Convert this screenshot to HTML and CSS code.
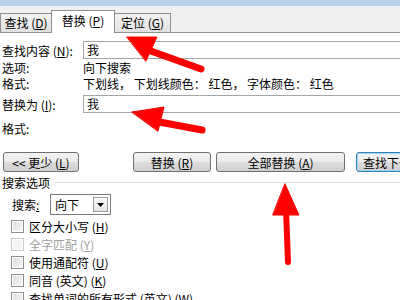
FILE: index.html
```html
<!DOCTYPE html>
<html>
<head>
<meta charset="utf-8">
<link rel="stylesheet" href="styles.css">
</head>
<body>
<div class="win">
  <div class="topband"></div>
  <div class="tabs">
    <div class="tab t1">查找 (<u>D</u>)</div>
    <div class="tab active">替换 (<u>P</u>)</div>
    <div class="tab t3">定位 (<u>G</u>)</div>
  </div>
  <div class="panel">
    <div class="row r1">
      <span class="lbl">查找内容 (<u>N</u>):</span>
      <div class="field">我</div>
    </div>
    <div class="row line">
      <span class="lbl">选项:</span><span>向下搜索</span>
    </div>
    <div class="row line">
      <span class="lbl">格式:</span><span>下划线， 下划线颜色： 红色， 字体颜色： 红色</span>
    </div>
    <div class="row r2">
      <span class="lbl">替换为 (<u>I</u>):</span>
      <div class="field">我</div>
    </div>
    <div class="row line r3">
      <span class="lbl">格式:</span>
    </div>
    <div class="btnrow">
      <div class="btn b1">&lt;&lt; 更少 (<u>L</u>)</div>
      <div class="btn b2">替换 (<u>R</u>)</div>
      <div class="btn b3">全部替换 (<u>A</u>)</div>
      <div class="btn b4">查找下一处</div>
    </div>
    <div class="group">
      <span>搜索选项</span><div class="sep"></div>
    </div>
    <div class="search">
      <span class="slbl">搜索<u>:</u></span>
      <div class="select">
        <span class="val">向下</span>
        <div class="drop"><svg width="7" height="4" viewBox="0 0 7 4"><path d="M0 0H7L3.5 4Z" fill="#000"/></svg></div>
      </div>
    </div>
    <div class="chk"><span class="box"></span>区分大小写 (<u>H</u>)</div>
    <div class="chk dis"><span class="box"></span>全字匹配 (<u>Y</u>)</div>
    <div class="chk"><span class="box"></span>使用通配符 (<u>U</u>)</div>
    <div class="chk"><span class="box"></span>同音 (英文) (<u>K</u>)</div>
    <div class="chk"><span class="box"></span>查找单词的所有形式 (英文) (<u>W</u>)</div>
  </div>
  <svg class="arrows" width="400" height="300" viewBox="0 0 400 300">
    <g fill="#ff0000" stroke="#ff0000" stroke-linecap="round" stroke-linejoin="round">
      <line x1="148" y1="50" x2="201" y2="69" stroke-width="7"/>
      <polygon points="127,37 157,37 146,61" stroke-width="1"/>
      <line x1="154" y1="121" x2="202" y2="130" stroke-width="7"/>
      <polygon points="132,112 164,107 158,131" stroke-width="1"/>
      <line x1="286" y1="210" x2="288" y2="262" stroke-width="6"/>
      <polygon points="285,184 299,215 273,215" stroke-width="1"/>
    </g>
  </svg>
</div>
</body>
</html>
```

FILE: styles.css
```css
* { box-sizing: border-box; }
body {
  margin: 0;
  font-family: "Noto Sans CJK SC", "Noto Sans", sans-serif;
  font-size: 12px;
  color: #000;
}
u { text-decoration: underline; text-underline-offset: 1px; }
.win {
  position: relative;
  width: 400px;
  height: 300px;
  overflow: hidden;
  background: #fff;
}
.topband { height: 6px; background: #b9d1ea; }
.tabs {
  height: 27px;
  background: #f0f0f0;
  display: flex;
  align-items: flex-end;
  border-bottom: 1px solid #919191;
}
.tab {
  height: 19px;
  border: 1px solid #919191;
  border-bottom: none;
  background: linear-gradient(#f3f3f3, #e1e1e1);
  display: flex;
  align-items: center;
  justify-content: center;
  line-height: 1;
  white-space: nowrap;
}
.t1 { width: 52px; }
.tab.active {
  width: 64px;
  height: 23px;
  margin-left: -1px;
  margin-bottom: -1px;
  background: #fff;
  position: relative;
  padding-bottom: 3px;
}
.t3 { width: 57px; margin-left: -1px; }
.panel { padding-left: 2px; }
.row { display: flex; align-items: center; white-space: nowrap; }
.lbl { width: 81px; flex: none; }
.r1 { margin-top: 8px; }
.field {
  flex: 1;
  height: 18px;
  margin-right: -6px;
  border: 1px solid #a5a5a5;
  padding-left: 3px;
  line-height: 16px;
}
.line { height: 16px; }
.r2 { margin-top: 4px; }
.r3 { margin-top: 7px; }
.btnrow { display: flex; margin-top: 16px; }
.btn {
  height: 20px;
  border: 1px solid #707070;
  border-radius: 3px;
  background: linear-gradient(#f2f2f2 0%, #ebebeb 50%, #dddddd 51%, #cfcfcf 100%);
  display: flex;
  align-items: center;
  justify-content: center;
  white-space: nowrap;
  flex: none;
}
.b1 { width: 76px; margin-left: 1px; }
.b2 { width: 78px; margin-left: 54px; }
.b3 { width: 129px; margin-left: 5px; }
.b4 {
  width: 90px;
  margin-left: 11px;
  border-color: #3c7fb1;
  box-shadow: inset 0 0 0 1px #9cd6f5;
  justify-content: flex-start;
  padding-left: 6px;
}
.group { display: flex; align-items: center; height: 17px; margin-top: 2px; }
.sep { flex: 1; height: 1px; background: #d5dfe5; margin-left: 4px; }
.search { display: flex; align-items: center; height: 25px; margin-top: 1px; }
.slbl { margin-left: 10px; width: 38px; }
.select {
  width: 61px;
  height: 21px;
  border: 1px solid #7a7a7a;
  display: flex;
  align-items: center;
  justify-content: space-between;
  padding: 2px;
}
.val { padding-left: 2px; }
.drop {
  width: 15px;
  height: 15px;
  border: 1px solid #9a9a9a;
  background: linear-gradient(#fafafa, #e6e6e6);
  display: flex;
  align-items: center;
  justify-content: center;
}
.chk { display: flex; align-items: center; height: 18px; white-space: nowrap; }
.box {
  width: 13px;
  height: 13px;
  margin-left: 9px;
  margin-right: 5px;
  border: 1px solid #8e8f8f;
  background: linear-gradient(135deg, #dcdcdc, #f8f8f8);
  box-shadow: inset 0 0 0 1px #fff;
  flex: none;
}
.dis { color: #a0a0a0; }
.dis .box { border-color: #c8c8c8; background: #f4f4f4; }
.arrows { position: absolute; left: 0; top: 0; pointer-events: none; }
```
